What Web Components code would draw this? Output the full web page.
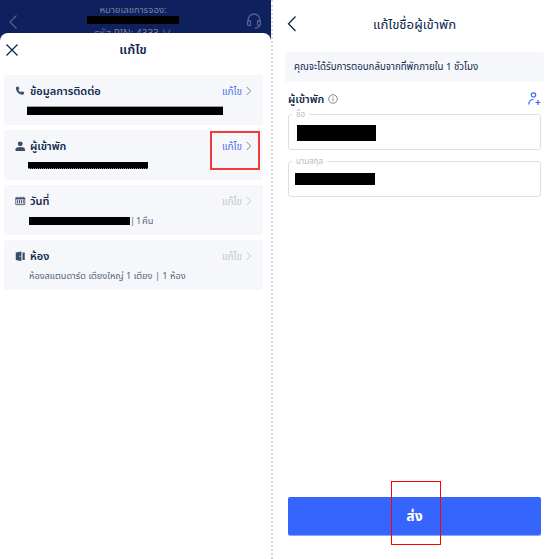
<!DOCTYPE html>
<html lang="th"><head><meta charset="utf-8">
<style>
html,body{margin:0;padding:0;background:#fff}
body{width:550px;height:559px;overflow:hidden;font-family:"Noto Sans","Noto Sans Thai","Noto Sans CJK SC",sans-serif;color:#0f294d}
</style></head><body>
<app-shell>
  <edit-menu slot="left">
    <edit-card title-text="ข้อมูลการติดต่อ" icon="phone" active bar="196" bar-h="8" bar-x="-2" edge="top"></edit-card>
    <edit-card title-text="ผู้เข้าพัก" icon="person" active bar="120" bar-h="6" bar-x="-1" edge="bottom" marked></edit-card>
    <edit-card title-text="วันที่" icon="calendar" bar="101" bar-h="8" bar-x="0" text="| 1 คืน" tight></edit-card>
    <edit-card title-text="ห้อง" icon="door" text="ห้องสแตนดาร์ด เตียงใหญ่ 1 เตียง | 1 ห้อง"></edit-card>
  </edit-menu>
  <guest-form slot="right"></guest-form>
</app-shell>
<script>
const FONT='"Noto Sans","Noto Sans Thai","Noto Sans CJK SC",sans-serif';
const ICONS={
 phone:'<path fill="#3d4f68" d="M2.200 1.200 4.600.7l1.300 3-1.400 1.200c.6 1.400 1.800 2.700 3.400 3.500l1.300-1.400 3 1.400-.5 2.400c-.1.6-.6.9-1.200.9C5.300 11.500 1 7 1.200 2.300c0-.5.4-1 1-1.100z"/>',
 person:'<circle cx="7" cy="3.800" r="3.300" fill="#3d4f68"/><path fill="#3d4f68" d="M.7 13.500V11C.7 9 3.500 8 7 8s6.300 1 6.300 3v2.500z"/>',
 calendar:'<path fill="#3d4f68" d="M.5 2h13v2H.5z"/><path fill="none" stroke="#3d4f68" stroke-width="1.100" d="M1 4h12v7.500H1z"/><path stroke="#3d4f68" stroke-width="1.300" d="M3 1v2M7 1v2M11 1v2M3.500 5.500v4.500M6 5.500v4.500M8.500 5.500v4.500M11 5.500v4.500"/>',
 door:'<path fill="#3d4f68" d="M1 2 8.500.5v13L1 12z"/><path fill="#3d4f68" d="M10 2h3v10h-3z"/><circle cx="6.500" cy="7" r=".8" fill="#f5f7fa"/>'
};
class AppShell extends HTMLElement{constructor(){super();this.attachShadow({mode:'open'}).innerHTML=`<style>
:host{display:flex;width:550px;height:559px}
.l{width:271px;flex:none;border-right:2px dotted #d4d6da}
.r{flex:1;min-width:0}
</style><div class="l"><slot name="left"></slot></div><div class="r"><slot name="right"></slot></div>`}}
class EditMenu extends HTMLElement{constructor(){super();this.attachShadow({mode:'open'}).innerHTML=`<style>
:host{display:flex;flex-direction:column;height:559px;background:#0e205e;position:relative;overflow:hidden}
.top{height:33px;flex:none;position:relative;display:flex;align-items:flex-start;justify-content:space-between;padding:0 8px 0 8px;color:#7f89a6;font:11px ${FONT}}
.mid{position:absolute;left:0;right:5px;top:2px;text-align:center;line-height:16px;font-size:9.6px;color:#7a819b;display:flex;flex-direction:column;align-items:center}
.red{width:92px;height:8px;background:#000;margin-top:-2px}
.pin{font-size:10px;line-height:14px;margin-top:2px}
.sheet{flex:1;background:#fff;border-radius:8px 8px 0 0;display:flex;flex-direction:column;position:relative}
.hd{height:33px;display:flex;align-items:center;justify-content:center;position:relative;font-size:13px;font-weight:600;color:#0f294d;flex:none;padding-right:5px}
.hd svg{position:absolute;left:5px;top:10px}
.list{display:flex;flex-direction:column;gap:5px;padding:9px 8px 0 4px}
.bk{margin-top:14px}
.hs{margin-top:13px;margin-right:1px}
</style>
<div class="top"><svg class="bk" width="12" height="16" viewBox="0 0 12 16" fill="none" stroke="#55628a" stroke-width="1.200"><path d="M8.500 1.500 2 8l6.500 6.500"/></svg>
<div class="mid"><span>หมายเลขการจอง:</span><div class="red"></div><span class="pin">รหัส PIN: 4333 ∨</span></div>
<svg class="hs" width="16" height="16" viewBox="0 0 16 16" fill="none" stroke="#55628a" stroke-width="1.300"><path d="M2 9V7a6 6 0 0 1 12 0v2"/><rect x="1.500" y="7.500" width="3" height="5" rx="1.200"/><rect x="11.500" y="7.500" width="3" height="5" rx="1.200"/><path d="M13 12.500c0 1.500-2 2.500-4 2.500"/></svg></div>
<div class="sheet"><div class="hd"><svg width="14" height="14" viewBox="0 0 14 14" stroke="#0f294d" stroke-width="1.300" fill="none"><path d="M1.500 1.500l11 11M12.500 1.500l-11 11"/></svg>แก้ไข</div>
<div class="list"><slot></slot></div></div>`}}
class EditCard extends HTMLElement{connectedCallback(){
 const g=n=>this.getAttribute(n);
 const active=this.hasAttribute('active');
 const bar=g('bar');
 const edge=g('edge');
 this.attachShadow({mode:'open'}).innerHTML=`<style>
:host{display:block;background:#f5f7fa;border-radius:3px;height:50px;position:relative;box-sizing:border-box;padding:7px 11px 0 11px}
.row{display:flex;align-items:center;height:18px}
.ic{width:10.500px;height:10.500px;flex:none;margin:0 4.500px 0 0}
.t{font-size:11px;font-weight:600;color:#0f294d;line-height:18px;flex:1}
.e{font-size:10px;line-height:18px;color:${active?'#4f74e8':'#c3c8d1'}}
.c{margin-left:4px;flex:none}
.d{display:flex;align-items:center;height:15px;margin:3px 0 0 14px;font-size:9.200px;color:#556679;white-space:nowrap}
.b{background:#000;flex:none}
.top{border-top:1px solid #9aa0a8}
.bottom{border-bottom:1px dotted #7f8896}
.mark{position:absolute;left:206px;top:1px;width:50px;height:39px;border:2px solid #f33a3a;box-sizing:border-box}
</style><div class="row"><svg class="ic" viewBox="0 0 14 14">${ICONS[g('icon')]}</svg><span class="t">${g('title-text')}</span><span class="e">แก้ไข</span><svg class="c" width="6" height="10" viewBox="0 0 6 10" fill="none" stroke="${active?'#7d8796':'#c3c8d1'}"><path d="M.7 1l4 4-4 4"/></svg></div>
<div class="d">${bar?`<span class="b ${edge||''}" style="width:${bar}px;height:${g('bar-h')}px;margin-left:${g('bar-x')}px"></span>`:''}${g('text')?`<span${this.hasAttribute('tight')?' style="word-spacing:-1.500px"':''}>${g('text')}</span>`:''}</div>${this.hasAttribute('marked')?'<div class="mark"></div>':''}`;
}}
class GuestField extends HTMLElement{connectedCallback(){
 const g=n=>this.getAttribute(n);
 this.attachShadow({mode:'open'}).innerHTML=`<style>
:host{display:flex;align-items:center;height:36px;border:1px solid #dde1e7;border-radius:3px;position:relative;box-sizing:border-box}
.lb{position:absolute;left:3px;top:-6px;background:#fff;padding:0 4px;font-size:8px;line-height:10px;color:#b4bac4}
.b{background:#000;height:${g('h')}px;width:${g('w')}px;margin-left:${g('x')}px;margin-top:${g('y')}px}
</style><span class="lb">${g('label')}</span><div class="b"></div>`;
}}
class GuestForm extends HTMLElement{constructor(){super();this.attachShadow({mode:'open'}).innerHTML=`<style>
:host{display:flex;flex-direction:column;height:559px;padding:0 6px 0 12px;box-sizing:border-box;position:relative;background:#fff}
.hd{height:50px;display:flex;align-items:center;justify-content:center;position:relative;font-size:13.200px;color:#0f294d;flex:none}
.hd svg{position:absolute;left:1px;top:15px}
.note{background:#f5f7fa;border-radius:3px;height:30px;margin:2px 0 0 0;display:flex;align-items:center;padding-left:9px;font-size:9.700px;color:#0f294d}
.sec{display:flex;align-items:center;height:24px;margin:5px 3px 0 3px;font-size:11px;font-weight:600}
.sec .i{margin-left:4px}.sec .a{margin-left:auto;margin-bottom:2px}
.fields{display:flex;flex-direction:column;gap:11px;margin:3px 3px 0 3px;flex:none}
.go{margin:300px 3px 0 3px;height:38px;background:#3565fc;border-radius:2px;box-shadow:0 1px 0 #8aa5ff;color:#fff;font-size:14px;font-weight:700;display:flex;align-items:center;justify-content:center;flex:none}
.mark{position:absolute;left:118px;top:481px;width:50px;height:64px;border:1px solid #f00;box-sizing:border-box}
</style>
<div class="hd"><svg width="12" height="18" viewBox="0 0 12 18" fill="none" stroke="#0f294d" stroke-width="1.300"><path d="M9.500 1.500 2.500 8.800l7 7.200"/></svg>แก้ไขชื่อผู้เข้าพัก</div>
<div class="note">คุณจะได้รับการตอบกลับจากที่พักภายใน 1 ชั่วโมง</div>
<div class="sec">ผู้เข้าพัก<svg class="i" width="10" height="10" viewBox="0 0 10 10" fill="none" stroke="#5f6d82" stroke-width=".8"><circle cx="5" cy="5" r="4.300"/><path d="M5 4.300v3M5 2.500v1"/></svg>
<svg class="a" width="13" height="13" viewBox="0 0 13 13" fill="none" stroke="#3565fc" stroke-width="1.200"><circle cx="5.500" cy="3" r="2.200"/><path d="M.8 12.500c0-3 1.800-5 4.700-5M7.500 10.500h5M10 8v5"/></svg></div>
<div class="fields"><guest-field label="ชื่อ" w="79" h="16" x="8" y="2"></guest-field><guest-field label="นามสกุล" w="80" h="12" x="6" y="-1"></guest-field></div>
<div class="go">ส่ง</div><div class="mark"></div>`}}
customElements.define('app-shell',AppShell);
customElements.define('edit-menu',EditMenu);
customElements.define('edit-card',EditCard);
customElements.define('guest-field',GuestField);
customElements.define('guest-form',GuestForm);
</script>
</body></html>
